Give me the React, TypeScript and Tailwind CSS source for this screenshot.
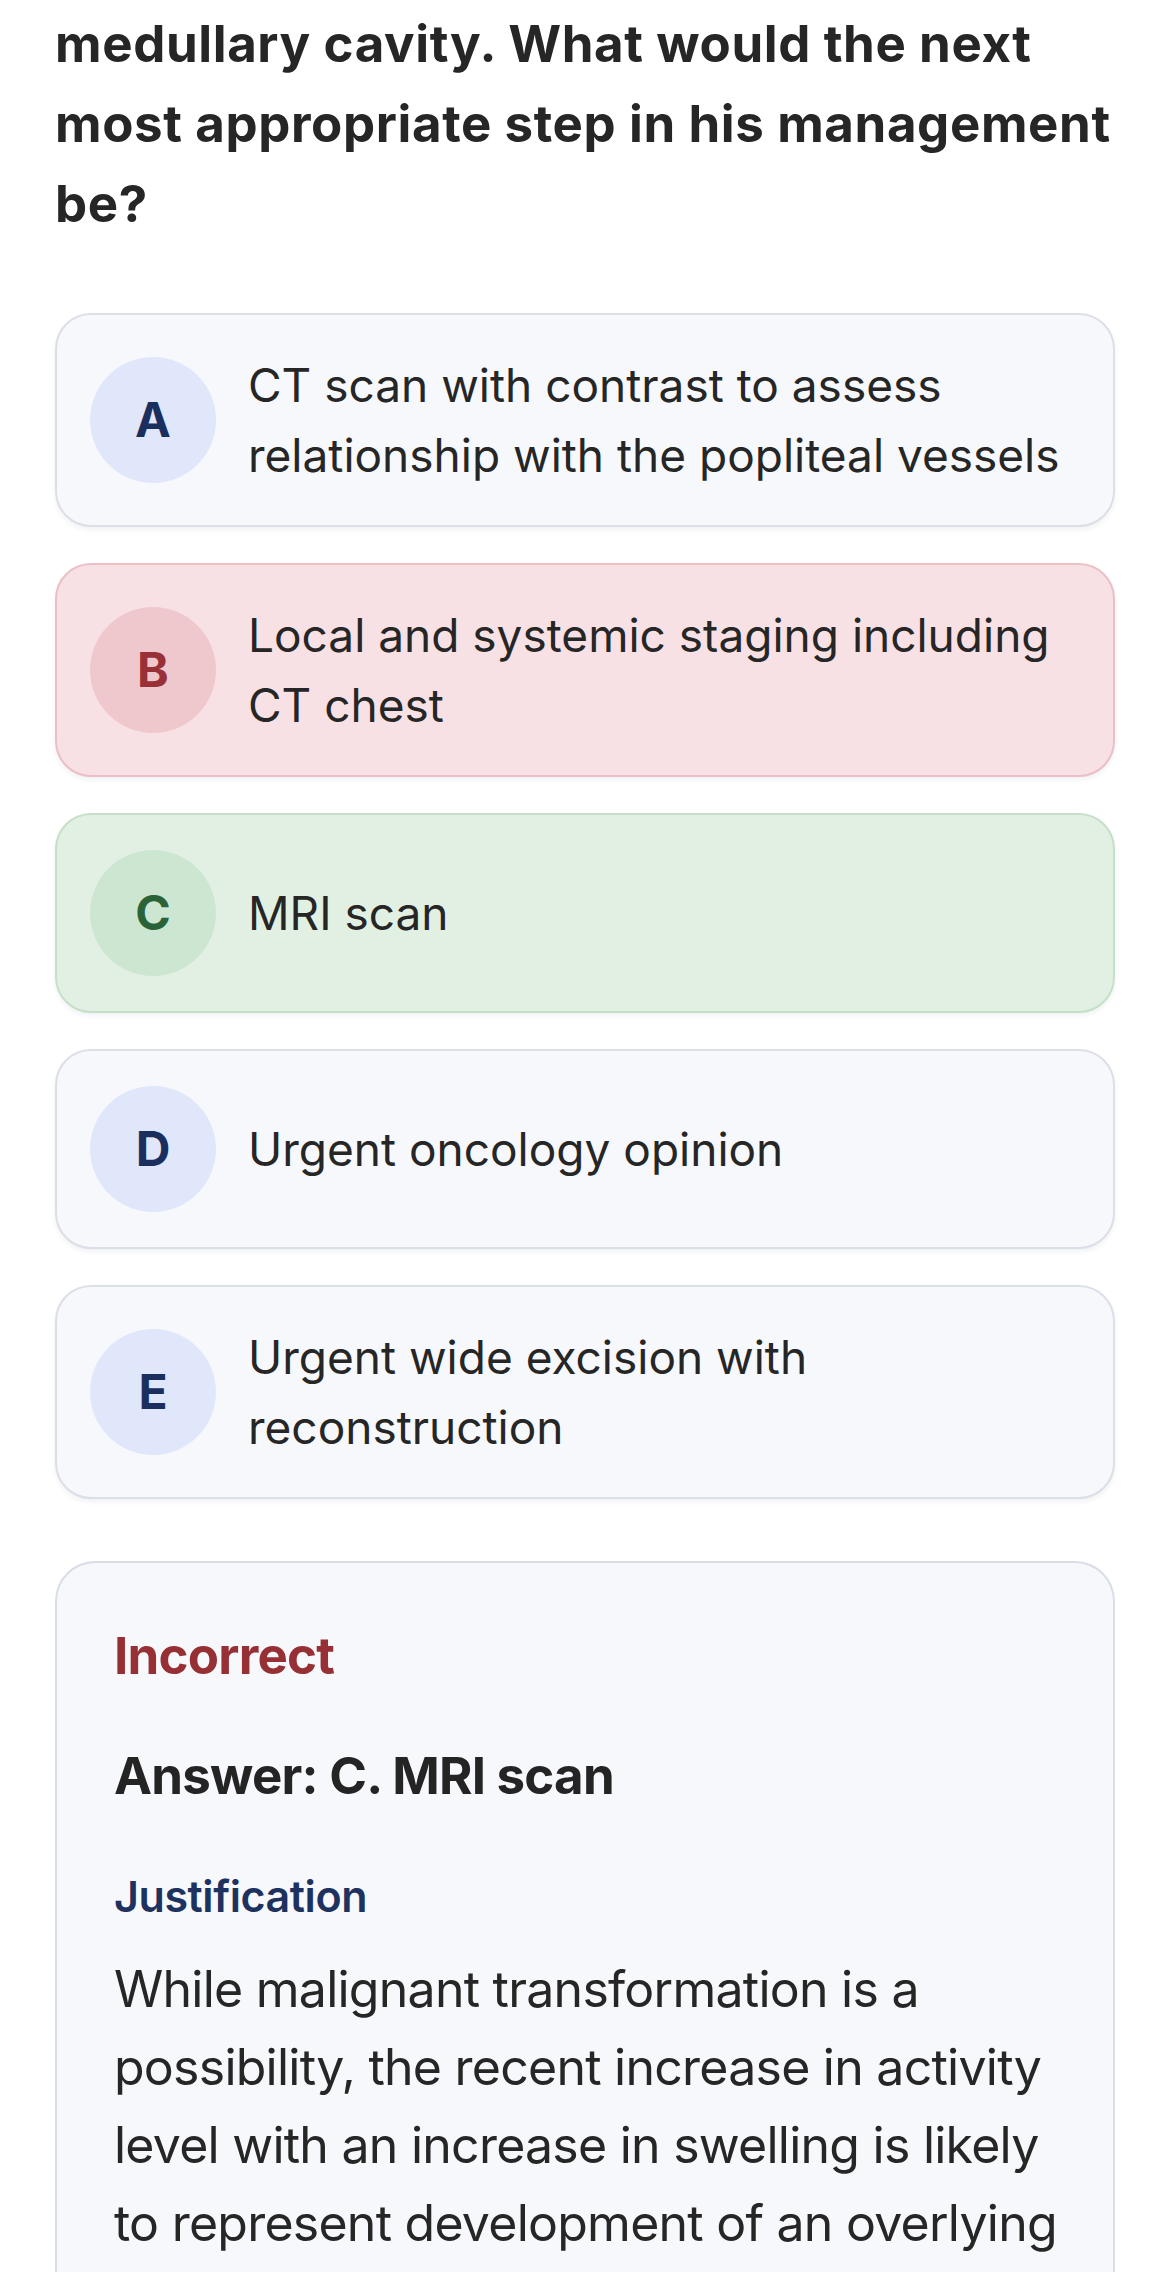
import React from "react";

type Tone = "neutral" | "wrong" | "right";

interface Option {
  letter: string;
  text: string;
  tone: Tone;
}

const options: Option[] = [
  { letter: "A", text: "CT scan with contrast to assess relationship with the popliteal vessels", tone: "neutral" },
  { letter: "B", text: "Local and systemic staging including CT chest", tone: "wrong" },
  { letter: "C", text: "MRI scan", tone: "right" },
  { letter: "D", text: "Urgent oncology opinion", tone: "neutral" },
  { letter: "E", text: "Urgent wide excision with reconstruction", tone: "neutral" },
];

const cardTone: Record<Tone, string> = {
  neutral: "bg-[#f7f8fc] border-[#dcdfe7]",
  wrong: "bg-[#f8e1e4] border-[#ebbfc5]",
  right: "bg-[#e2f0e3] border-[#c6dfc9]",
};

const badgeTone: Record<Tone, string> = {
  neutral: "bg-[#e1e7fa] text-[#1b2f5e]",
  wrong: "bg-[#efc8cd] text-[#993037]",
  right: "bg-[#cde6d2] text-[#2b6339]",
};

const OptionCard = ({ option }: { option: Option }) => (
  <div
    className={`flex items-center gap-[32px] rounded-[36px] border-2 px-[33px] py-[35px] shadow-[0_3px_5px_rgba(20,30,60,0.06)] ${cardTone[option.tone]}`}
  >
    <div
      className={`flex h-[126px] w-[126px] shrink-0 items-center justify-center rounded-full text-[48px] font-bold ${badgeTone[option.tone]}`}
    >
      {option.letter}
    </div>
    <div className="flex-1 text-[46px] leading-[70px] text-[#262626]">{option.text}</div>
  </div>
);

export default function App() {
  return (
    <div className="min-h-screen bg-white pl-[55px] pr-[48px] font-['Inter','Noto_Sans',sans-serif] text-[#262626]">
      <h2 className="whitespace-nowrap pt-[4px] text-[51px] font-bold leading-[80px] tracking-[0.012em] text-[#262626]">
        medullary cavity. What would the next
        <br />
        most appropriate step in his management
        <br />
        be?
      </h2>

      <div className="mt-[69px] flex flex-col gap-[36px]">
        {options.map((o) => (
          <OptionCard key={o.letter} option={o} />
        ))}
      </div>

      <div className="mt-[62px] rounded-[40px] border-2 border-b-0 border-[#d8dde6] bg-[#f7f8fc] pb-[60px] pl-[57px] pr-[50px] pt-[60px]">
        <p className="text-[51px] font-bold leading-[66px] tracking-[-0.015em] text-[#963035]">Incorrect</p>
        <p className="mt-[54px] text-[51px] font-bold leading-[66px] tracking-[-0.015em] text-[#242424]">
          Answer: C. MRI scan
        </p>
        <p className="mt-[59px] text-[43px] font-semibold leading-[56px] tracking-[-0.01em] text-[#1e325f]">
          Justification
        </p>
        <p className="mt-[26px] text-[50px] leading-[78px] tracking-[-0.015em] text-[#262626]">
          While malignant transformation is a possibility, the recent increase in activity level with an increase
          in swelling is likely to represent development of an overlying bursa, which is best assessed with an MRI
          scan.
        </p>
      </div>
    </div>
  );
}
